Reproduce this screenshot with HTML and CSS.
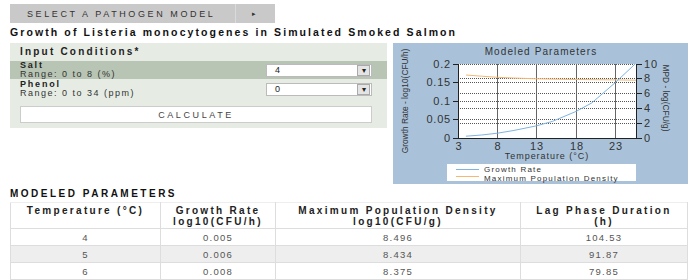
FILE: index.html
```html
<!DOCTYPE html>
<html lang="en">
<head>
  <meta charset="UTF-8" />
  <title>Pathogen Model - Listeria in Smoked Salmon</title>
  <link rel="stylesheet" href="styles.css">
</head>
<body>

<div class="model-bar">
  <span class="model-label">SELECT A PATHOGEN MODEL</span>
  <span class="model-arrow">&#9656;</span>
</div>

<h1 class="model-title">Growth of Listeria monocytogenes in Simulated Smoked Salmon</h1>

<div class="top-row">
  <div class="inputs">
    <div class="inputs-head">Input Conditions*</div>
    <div class="input-row shaded">
      <div class="input-label"><strong>Salt</strong><br>Range: 0 to 8 (%)</div>
      <div class="select-box"><span>4</span><span class="select-btn">&#9662;</span></div>
    </div>
    <div class="input-row">
      <div class="input-label"><strong>Phenol</strong><br>Range: 0 to 34 (ppm)</div>
      <div class="select-box"><span>0</span><span class="select-btn">&#9662;</span></div>
    </div>
    <div class="calc-wrap">
      <button class="calc-btn">CALCULATE</button>
    </div>
  </div>

  <div class="chart">
    <svg width="295" height="141" viewBox="0 0 295 141">
      <text x="148" y="12" class="c-title" text-anchor="middle">Modeled Parameters</text>
      <rect x="65" y="21" width="179" height="74" fill="#fff"/>
      <!-- dotted grid, left and right scale -->
      <g stroke="#555" stroke-width="1" stroke-dasharray="1,1">
        <line x1="65" x2="244" y1="21.5" y2="21.5"/>
        <line x1="65" x2="244" y1="39.5" y2="39.5"/>
        <line x1="65" x2="244" y1="58.5" y2="58.5"/>
        <line x1="65" x2="244" y1="76.5" y2="76.5"/>
        <line x1="65" x2="244" y1="35.5" y2="35.5"/>
        <line x1="65" x2="244" y1="50.5" y2="50.5"/>
        <line x1="65" x2="244" y1="65.5" y2="65.5"/>
        <line x1="65" x2="244" y1="80.5" y2="80.5"/>
      </g>
      <g stroke="#666" stroke-width="1">
        <line x1="104.5" x2="104.5" y1="21" y2="95"/>
        <line x1="143.5" x2="143.5" y1="21" y2="95"/>
        <line x1="183.5" x2="183.5" y1="21" y2="95"/>
        <line x1="222.5" x2="222.5" y1="21" y2="95"/>
      </g>
      <polyline fill="none" stroke="#f4b870" stroke-width="1" points="73,32 88.6,33.2 104.4,34.3 120.1,35 143.7,35.8 183,36.5 222.4,36.9 243,37.2"/>
      <polyline fill="none" stroke="#7eb4e2" stroke-width="1" points="72.9,93.2 88.6,92 104.4,90.2 120.1,87.6 143.7,82.8 159.4,78.4 183.1,68.4 198.8,59.9 222.4,39.5 242.1,21"/>
      <g stroke="#222" stroke-width="1">
        <line x1="65.5" x2="65.5" y1="21" y2="96"/>
        <line x1="243.5" x2="243.5" y1="21" y2="96"/>
        <line x1="65" x2="244" y1="95.5" y2="95.5"/>
        <line x1="60" x2="65" y1="21.5" y2="21.5"/>
        <line x1="60" x2="65" y1="39.5" y2="39.5"/>
        <line x1="60" x2="65" y1="58.5" y2="58.5"/>
        <line x1="60" x2="65" y1="76.5" y2="76.5"/>
        <line x1="60" x2="65" y1="95.5" y2="95.5"/>
        <line x1="244" x2="249" y1="21.5" y2="21.5"/>
        <line x1="244" x2="249" y1="35.5" y2="35.5"/>
        <line x1="244" x2="249" y1="50.5" y2="50.5"/>
        <line x1="244" x2="249" y1="65.5" y2="65.5"/>
        <line x1="244" x2="249" y1="80.5" y2="80.5"/>
        <line x1="244" x2="249" y1="95.5" y2="95.5"/>
      </g>
      <g class="c-tick" text-anchor="end">
        <text x="58" y="25">0.2</text>
        <text x="58" y="43">0.15</text>
        <text x="58" y="62">0.1</text>
        <text x="58" y="80">0.05</text>
        <text x="58" y="99">0</text>
      </g>
      <g class="c-tick">
        <text x="251" y="25">10</text>
        <text x="251" y="39">8</text>
        <text x="251" y="54">6</text>
        <text x="251" y="69">4</text>
        <text x="251" y="84">2</text>
        <text x="251" y="99">0</text>
      </g>
      <g class="c-tick" text-anchor="middle">
        <text x="66" y="107">3</text>
        <text x="105" y="107">8</text>
        <text x="144" y="107">13</text>
        <text x="184" y="107">18</text>
        <text x="223" y="107">23</text>
      </g>
      <text x="154" y="116" class="c-axis" text-anchor="middle">Temperature (°C)</text>
      <text class="c-ytitle" text-anchor="middle" transform="translate(15,58) rotate(-90)">Growth Rate - log10(CFU/h)</text>
      <text class="c-ytitle" text-anchor="middle" transform="translate(270,55) rotate(90)">MPD - log(CFU/g)</text>
      <rect x="54" y="121" width="189" height="17" fill="#fff"/>
      <line x1="63" x2="86" y1="126.5" y2="126.5" stroke="#7eb4e2"/>
      <line x1="63" x2="86" y1="133.5" y2="133.5" stroke="#f4b870"/>
      <text x="91" y="128.8" class="c-legend">Growth Rate</text>
      <text x="91" y="137.8" class="c-legend">Maximum Population Density</text>
    </svg>
  </div>
</div>

<h2 class="table-title">MODELED PARAMETERS</h2>
<table class="params">
  <thead>
    <tr>
      <th class="col-temp">Temperature (°C)</th>
      <th class="col-rate">Growth Rate<br>log10(CFU/h)</th>
      <th class="col-mpd">Maximum Population Density<br>log10(CFU/g)</th>
      <th>Lag Phase Duration<br>(h)</th>
    </tr>
  </thead>
  <tbody>
    <tr><td>4</td><td>0.005</td><td>8.496</td><td>104.53</td></tr>
    <tr><td>5</td><td>0.006</td><td>8.434</td><td>91.87</td></tr>
    <tr><td>6</td><td>0.008</td><td>8.375</td><td>79.85</td></tr>
  </tbody>
</table>

</body>
</html>
```

FILE: styles.css
```css
body {
  margin: 0;
  padding: 4px 7px 0 10px;
  font-family: "Liberation Sans", Arial, sans-serif;
  color: #222;
  background: #fff;
}
.model-bar {
  display: flex;
  width: 265px;
  height: 19px;
  background: #c9c9c9;
  font-size: 9px;
  letter-spacing: 2.6px;
  color: #333;
}
.model-label {
  display: flex;
  align-items: center;
  padding-left: 17px;
  width: 208px;
  border-right: 1px solid #dadada;
}
.model-arrow {
  display: flex;
  align-items: center;
  padding-left: 16px;
  font-size: 7px;
}
.model-title {
  margin: 3px 0 0;
  font-size: 10.5px;
  font-weight: bold;
  letter-spacing: 2.1px;
  color: #111;
}
.top-row {
  display: flex;
  gap: 6px;
  margin-top: 5px;
}
.inputs {
  width: 377px;
  height: 85px;
  background: #e6ece4;
}
.inputs-head {
  height: 18px;
  line-height: 17px;
  padding-left: 10px;
  font-size: 10px;
  font-weight: bold;
  letter-spacing: 2.2px;
  color: #222;
}
.input-row {
  display: flex;
  justify-content: space-between;
  align-items: center;
  height: 18px;
  padding: 0 15px 0 10px;
  margin-bottom: 1px;
}
.input-row.shaded {
  background: #b8c5b4;
}
.input-label {
  font-size: 9px;
  line-height: 9px;
  letter-spacing: 1.5px;
  color: #333;
}
.input-label strong {
  color: #222;
  letter-spacing: 1.8px;
}
.select-box {
  display: flex;
  justify-content: space-between;
  align-items: center;
  width: 106px;
  height: 13px;
  background: #fff;
  border: 1px solid #bbb;
  font-size: 9px;
  padding-left: 8px;
  box-sizing: border-box;
}
.select-btn {
  width: 13px;
  height: 11px;
  margin-right: 1px;
  background: #e4e4e4;
  border: 1px solid #aaa;
  font-size: 8px;
  line-height: 10px;
  text-align: center;
  box-sizing: border-box;
}
.calc-wrap {
  padding: 7px 15px 0 10px;
}
.calc-btn {
  display: block;
  width: 100%;
  height: 17px;
  background: #fff;
  border: 1px solid #ccc;
  font-family: "Liberation Sans", Arial, sans-serif;
  font-size: 9px;
  letter-spacing: 2.6px;
  color: #444;
  padding: 0;
}
.chart {
  width: 295px;
  height: 141px;
  background: #a9c2da;
}
.chart svg {
  display: block;
  font-family: "Liberation Sans", Arial, sans-serif;
}
.c-title {
  font-size: 10px;
  fill: #333;
  letter-spacing: 1.1px;
}
.c-tick {
  font-size: 11px;
  fill: #333;
  letter-spacing: 0.8px;
}
.c-axis {
  font-size: 9px;
  fill: #333;
  letter-spacing: 0.95px;
}
.c-ytitle {
  font-size: 8.4px;
  fill: #333;
}
.c-legend {
  font-size: 8px;
  fill: #333;
  letter-spacing: 1.2px;
}
.table-title {
  margin: 4px 0 0;
  font-size: 10px;
  font-weight: bold;
  letter-spacing: 2.5px;
  color: #111;
}
.params {
  width: 678px;
  margin-top: 3px;
  border-collapse: collapse;
  font-size: 9.5px;
  letter-spacing: 1.2px;
}
.params th {
  height: 23px;
  padding: 2px 0 0;
  border: 1px solid #ddd;
  border-top-color: #eee;
  font-size: 10px;
  font-weight: bold;
  letter-spacing: 2.3px;
  color: #222;
  line-height: 11px;
  vertical-align: top;
}
.params td {
  height: 16px;
  padding: 0;
  border: 1px solid #ddd;
  text-align: center;
  color: #555;
}
.params tbody tr:nth-child(2) td {
  background: #eee;
}
.col-temp { width: 149px; }
.col-rate { width: 114px; }
.col-mpd { width: 244px; }
```
